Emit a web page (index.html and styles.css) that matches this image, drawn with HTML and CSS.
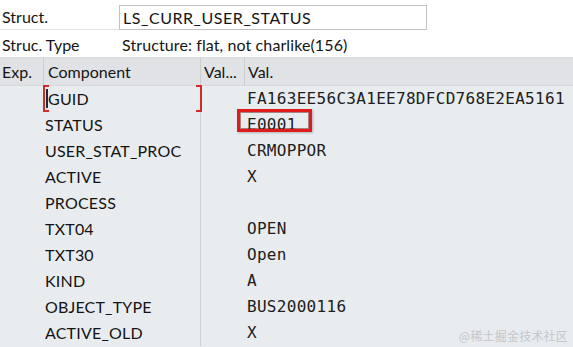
FILE: index.html
```html
<!DOCTYPE html>
<html lang="en">
<head>
<meta charset="utf-8">
<title>Struct LS_CURR_USER_STATUS</title>
<link rel="stylesheet" href="styles.css">
</head>
<body>
<div class="screen">
  <section class="attrs">
    <div class="attr-row">
      <div class="attr-label">Struct.</div>
      <div class="attr-input">LS_CURR_USER_STATUS</div>
    </div>
    <div class="attr-row attr-row--type">
      <div class="attr-label">Struc. Type</div>
      <div class="attr-text">Structure: flat, not charlike(156)</div>
    </div>
  </section>

  <section class="grid">
    <div class="grid-head">
      <div class="cell col-exp">Exp.</div>
      <div class="cell col-comp">Component</div>
      <div class="cell col-vt">Val...</div>
      <div class="cell col-val">Val.</div>
    </div>
    <div class="grid-body">
      <div class="row">
        <div class="cell col-exp"></div>
        <div class="cell col-comp focused"><span class="caret"></span>GUID</div>
        <div class="cell col-vt"></div>
        <div class="cell col-val">FA163EE56C3A1EE78DFCD768E2EA5161</div>
      </div>
      <div class="row">
        <div class="cell col-exp"></div>
        <div class="cell col-comp">STATUS</div>
        <div class="cell col-vt"></div>
        <div class="cell col-val marked">E0001</div>
      </div>
      <div class="row">
        <div class="cell col-exp"></div>
        <div class="cell col-comp">USER_STAT_PROC</div>
        <div class="cell col-vt"></div>
        <div class="cell col-val">CRMOPPOR</div>
      </div>
      <div class="row">
        <div class="cell col-exp"></div>
        <div class="cell col-comp">ACTIVE</div>
        <div class="cell col-vt"></div>
        <div class="cell col-val">X</div>
      </div>
      <div class="row">
        <div class="cell col-exp"></div>
        <div class="cell col-comp">PROCESS</div>
        <div class="cell col-vt"></div>
        <div class="cell col-val"></div>
      </div>
      <div class="row">
        <div class="cell col-exp"></div>
        <div class="cell col-comp">TXT04</div>
        <div class="cell col-vt"></div>
        <div class="cell col-val">OPEN</div>
      </div>
      <div class="row">
        <div class="cell col-exp"></div>
        <div class="cell col-comp">TXT30</div>
        <div class="cell col-vt"></div>
        <div class="cell col-val">Open</div>
      </div>
      <div class="row">
        <div class="cell col-exp"></div>
        <div class="cell col-comp">KIND</div>
        <div class="cell col-vt"></div>
        <div class="cell col-val">A</div>
      </div>
      <div class="row">
        <div class="cell col-exp"></div>
        <div class="cell col-comp">OBJECT_TYPE</div>
        <div class="cell col-vt"></div>
        <div class="cell col-val">BUS2000116</div>
      </div>
      <div class="row">
        <div class="cell col-exp"></div>
        <div class="cell col-comp">ACTIVE_OLD</div>
        <div class="cell col-vt"></div>
        <div class="cell col-val">X</div>
      </div>
    </div>
  </section>

  <div class="watermark">@稀土掘金技术社区</div>
</div>
</body>
</html>
```
FILE: styles.css
```css
*, *::before, *::after { box-sizing: border-box; }

html, body {
  margin: 0;
  padding: 0;
  background: #e9ecef;
}

.screen {
  position: relative;
  width: 573px;
  height: 347px;
  overflow: hidden;
  font-family: Lato, "Liberation Sans", sans-serif;
  font-size: 16px;
  color: #141414;
  background: #e9ecef;
}

/* ---------- attribute block ---------- */
.attrs {
  background: #ffffff;
  border-bottom: 1px solid #d9dadc;
  height: 58px;
}

.attr-row {
  display: flex;
  align-items: flex-end;
  height: 30px;
}

.attr-row--type {
  height: 27px;
  align-items: center;
}

.attr-label {
  width: 119px;
  height: 100%;
  padding-left: 2px;
  display: flex;
  align-items: center;
  padding-top: 4px;
  border-bottom: 1px solid #e1e2e4;
}

.attr-row--type .attr-label {
  padding-top: 1px;
  border-bottom: none;
}

.attr-input {
  width: 308px;
  height: 25px;
  border: 1px solid #bfc1c4;
  padding-left: 3px;
  line-height: 23px;
  letter-spacing: 0.55px;
  background: #fff;
}

.attr-text {
  padding-left: 3px;
  padding-top: 1px;
  letter-spacing: 0.1px;
}

/* ---------- grid ---------- */
.grid-head {
  display: flex;
  height: 28px;
  background: #e0e2e5;
  border-bottom: 1px solid #d6d8db;
}

.grid-head .cell {
  display: flex;
  align-items: center;
  border-right: 1px solid #cbcdd0;
}

.grid-head .col-val { border-right: none; }

.col-exp { width: 44px; padding-left: 2px; }
.col-comp { width: 157px; padding-left: 4px; }
.col-vt { width: 44px; padding-left: 3px; }
.col-val { flex: 1; padding-left: 3px; }

.row {
  display: flex;
  height: 26px;
}

.row .cell {
  display: flex;
  align-items: center;
  padding-bottom: 1px;
}

.row .col-comp {
  position: relative;
  padding-left: 1px;
  border-right: 1px solid #cdd0d4;
  letter-spacing: 0.2px;
}

.row .col-val {
  position: relative;
  padding-left: 2px;
  font-family: "DejaVu Sans Mono", "Liberation Mono", monospace;
  font-size: 16px;
  letter-spacing: 0.3px;
  color: #202020;
}

/* focus brackets on GUID cell */
.focused::before,
.focused::after {
  content: "";
  position: absolute;
  top: -1px;
  bottom: 0;
  width: 6px;
  border: 2px solid #d42a2a;
}
.focused::before { left: -1px; border-right: none; }
.focused::after { right: -2px; border-left: none; }

.caret {
  display: inline-block;
  width: 2px;
  height: 19px;
  background: #1d2a3a;
  margin-left: 1px;
}

/* red highlight around E0001 */
.marked::after {
  content: "";
  position: absolute;
  left: -8px;
  top: -3px;
  width: 75px;
  height: 23px;
  border: 3px solid #e01b1b;
  box-shadow: inset 0 0 0 1px rgba(90, 0, 0, 0.45), 1px 1px 2px rgba(0, 0, 0, 0.25);
}

.watermark {
  position: absolute;
  right: 5px;
  bottom: 3px;
  font-family: "Noto Sans CJK SC", sans-serif;
  font-size: 12px;
  color: #c3c6ca;
  letter-spacing: 0.2px;
}
```
